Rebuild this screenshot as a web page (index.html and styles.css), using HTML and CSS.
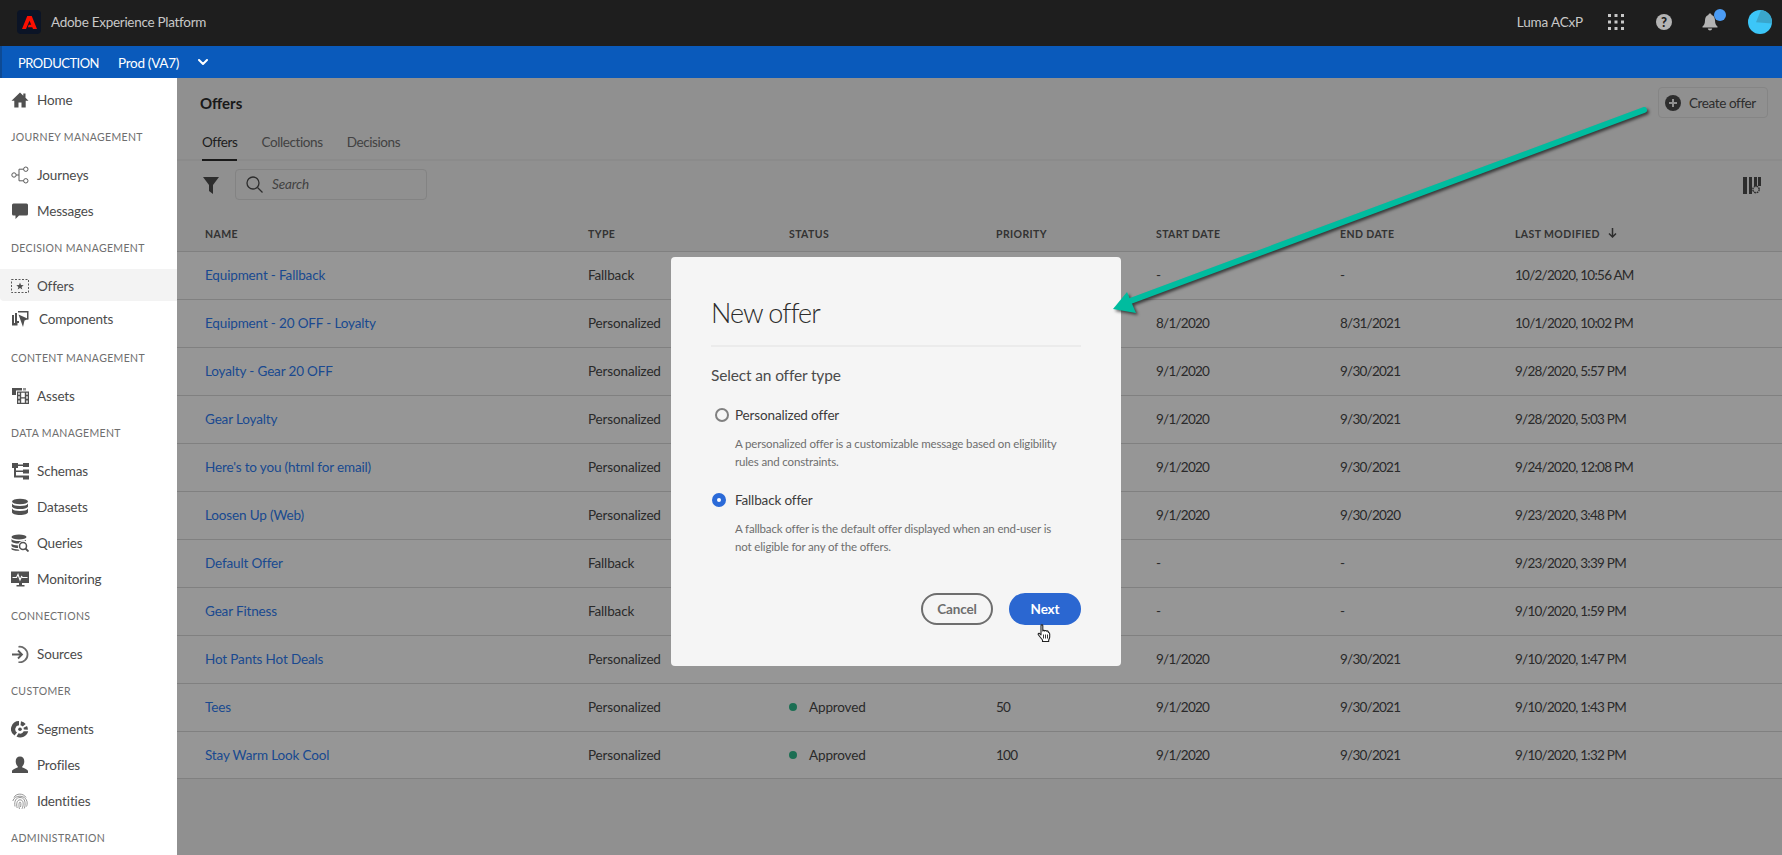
FILE: index.html
```html
<!DOCTYPE html>
<html lang="en">
<head>
  <meta charset="UTF-8" />
  <meta name="viewport" content="width=device-width, initial-scale=1.0" />
  <title>Offers - Adobe Experience Platform</title>
  <link rel="stylesheet" href="styles.css">
</head>
<body>
  <header class="topbar">
    <div class="brand">
      <span class="brand-logo">
        <svg width="15" height="13" viewBox="0 0 30 26"><path fill="#fa0f00" d="M10.500 0h9L30 26h-8L15 9.500 8 26H0zM13.500 17.500h5.500l2 5h-9.500z"/></svg>
      </span>
      <span class="brand-name">Adobe Experience Platform</span>
    </div>
    <div class="top-actions">
      <span class="org-name">Luma ACxP</span>
      <svg class="apps-icon" width="16" height="16" viewBox="0 0 16 16" fill="#c8c8c8">
        <rect x="0" y="0" width="3" height="3"/><rect x="6.500" y="0" width="3" height="3"/><rect x="13" y="0" width="3" height="3"/>
        <rect x="0" y="6.500" width="3" height="3"/><rect x="6.500" y="6.500" width="3" height="3"/><rect x="13" y="6.500" width="3" height="3"/>
        <rect x="0" y="13" width="3" height="3"/><rect x="6.500" y="13" width="3" height="3"/><rect x="13" y="13" width="3" height="3"/>
      </svg>
      <span class="help-icon">?</span>
      <span class="bell">
        <svg width="16" height="18" viewBox="0 0 16 18" fill="#b4b4b4"><path d="M8 0.500c-1 0-1.600.7-1.600 1.500C4 2.800 3 5 3 7.500c0 3-1 4.800-2.500 6v1h15v-1C14 12.300 13 10.500 13 7.500c0-2.500-1-4.700-3.400-5.500C9.600 1.200 9 .5 8 .5zM5.800 15.600h4.400C10 16.800 9.100 17.500 8 17.500s-2-.7-2.200-1.900z"/></svg>
        <span class="bell-dot"></span>
      </span>
      <svg class="avatar" width="24" height="24" viewBox="0 0 24 24"><circle cx="12" cy="12" r="12" fill="#3cc6f8"/><path fill="#3aa6cc" d="M13 0.100A12 12 0 0 1 23.900 13.500L8 12.200z"/></svg>
    </div>
  </header>

  <div class="envbar">
    <span class="env-label">PRODUCTION</span>
    <span class="env-name">Prod (VA7)</span>
    <svg width="10" height="7" viewBox="0 0 10 7"><path d="M1 1l4 4 4-4" fill="none" stroke="#fff" stroke-width="2" stroke-linecap="round" stroke-linejoin="round"/></svg>
  </div>

  <div class="layout">
    <nav class="sidebar">
      <a class="nav-item">
        <svg class="nav-icon" viewBox="0 0 18 18"><path d="M9 1.500L.5 9.800h2.800v6.700h4.200v-5h3v5h4.200V9.800h2.800L14.500 6.800V2.500h-2.200v2.200z"/></svg>
        Home
      </a>
      <div class="nav-heading">JOURNEY MANAGEMENT</div>
      <a class="nav-item">
        <svg class="nav-icon outline" viewBox="0 0 18 18"><circle cx="3" cy="9" r="2.200"/><circle cx="14.800" cy="3.200" r="2.200"/><circle cx="14.800" cy="14.800" r="2.200"/><path d="M5.200 9H8V3.200h4.600M8 9v5.800h4.600"/></svg>
        Journeys
      </a>
      <a class="nav-item">
        <svg class="nav-icon" viewBox="0 0 18 18"><path d="M2.500 1.500h13A1.500 1.500 0 0 1 17 3v9a1.500 1.500 0 0 1-1.500 1.500H8L4.500 17v-3.500h-2A1.500 1.500 0 0 1 1 12V3a1.500 1.500 0 0 1 1.500-1.500z"/></svg>
        Messages
      </a>
      <div class="nav-heading">DECISION MANAGEMENT</div>
      <a class="nav-item selected">
        <svg class="nav-icon" viewBox="0 0 18 18"><rect x=".5" y="2.500" width="17" height="13" fill="none" stroke="#5a5a5a" stroke-dasharray="2 1.500"/><path d="M9 5.500l1 2.500 2.700.2-2.100 1.700.7 2.600L9 11.100l-2.300 1.400.7-2.600-2.100-1.700L8 8z"/></svg>
        Offers
      </a>
      <a class="nav-item tight">
        <svg class="nav-icon" viewBox="0 0 18 18"><path d="M1 5h2v8h3.500v2.500H1z"/><path d="M4 3h2v8h2v2H4z"/><path d="M7 1h10.500v8.500h-1.500V2.500H7z"/><path d="M7.500 4.500l10 4.500-4 1.500L12 17z"/></svg>
        <span class="shifted">Components</span>
      </a>
      <div class="nav-heading">CONTENT MANAGEMENT</div>
      <a class="nav-item">
        <svg class="nav-icon" viewBox="0 0 18 18"><path d="M1 1h10v2.500H5V8H1z"/><path d="M12 1h3v2.500h-3z" opacity=".6"/><path fill-rule="evenodd" d="M6 4.500h12V17H6zM7.300 5.800v2h1.400v-2zm0 3.500v2.500h1.400V9.300zm0 4.200v2.200h1.400v-2.200zM15.300 5.800v2h1.400v-2zm0 3.500v2.500h1.400V9.300zm0 4.200v2.200h1.400v-2.200zM10.200 5.800v4.400h3.600V5.800zm0 5.800v4.100h3.600v-4.100z"/></svg>
        Assets
      </a>
      <div class="nav-heading">DATA MANAGEMENT</div>
      <a class="nav-item">
        <svg class="nav-icon" viewBox="0 0 18 18"><rect x="1" y="1" width="6" height="5"/><rect x="12" y="1" width="6" height="4"/><rect x="12" y="7.500" width="6" height="4"/><rect x="12" y="13.500" width="6" height="4"/><rect x="3" y="6" width="2" height="9"/><rect x="3" y="13.500" width="9" height="2"/><rect x="7" y="2.500" width="5" height="1.500"/><rect x="5" y="8.500" width="7" height="1.500"/></svg>
        Schemas
      </a>
      <a class="nav-item">
        <svg class="nav-icon" viewBox="0 0 18 18"><ellipse cx="9" cy="3.500" rx="8" ry="2.800"/><path d="M1 5.500c1 1.800 4 2.500 8 2.500s7-.7 8-2.500v3.200c-1 1.800-4 2.300-8 2.300s-7-.5-8-2.300zM1 10.500c1 1.800 4 2.500 8 2.500s7-.7 8-2.500v3.700c0 1.600-3.600 2.800-8 2.800s-8-1.200-8-2.800z"/></svg>
        Datasets
      </a>
      <a class="nav-item">
        <svg class="nav-icon" viewBox="0 0 18 18"><ellipse cx="8" cy="3" rx="7.500" ry="2.500"/><path d="M.5 5c1 1.500 3.500 2 7.500 2 3 0 5.500-.3 7-1.300V7c-3-.8-6 0-7.500 2.500-3 0-6-.5-7-2zM.5 9.800c1.200 1 3.500 1.500 6.500 1.600-.2 1-.1 1.500.2 2.500-3 0-5.700-.6-6.700-2zM.5 13.800c1.500 1.200 4 1.500 7 1.600l1 1.400c-4 .2-8-.6-8-1.800z"/><circle cx="12" cy="12" r="3.500" fill="none" stroke="#505050" stroke-width="1.500"/><path d="M14.500 14.500l3 3" stroke="#505050" stroke-width="1.800"/></svg>
        Queries
      </a>
      <a class="nav-item">
        <svg class="nav-icon" viewBox="0 0 18 18"><path d="M0 1.500h18v11.500H11v2h2.500v1.500h-8V15H8v-2H0z"/><path d="M1.500 7.500h4l1.500-3 2 5.500 1.500-3.500 1 1h5" fill="none" stroke="#fff" stroke-width="1.100"/></svg>
        Monitoring
      </a>
      <div class="nav-heading">CONNECTIONS</div>
      <a class="nav-item">
        <svg class="nav-icon outline thick" viewBox="0 0 18 18"><path d="M1 9.500h9.500M7 5.500l4 4-4 4"/><path d="M7.500 1.800a7.800 7.800 0 1 1 0 15.400" stroke="#6a6a6a"/></svg>
        Sources
      </a>
      <div class="nav-heading">CUSTOMER</div>
      <a class="nav-item">
        <svg class="nav-icon" viewBox="0 0 18 18"><path d="M8 1a8 8 0 0 0-4.500 14.600L6 12.500A4 4 0 0 1 8 5.200z"/><path d="M10 1.300l-.5 3.900a4 4 0 0 1 2.200 1.300l3-2.500A8 8 0 0 0 10 1.300zM16 6l-3.500 1.800.4 1.700 4 .3A8 8 0 0 0 16 6zM12.700 11.200a4 4 0 0 1-5.200 2L5.500 16.500a8 8 0 0 0 11.700-5.200z"/><circle cx="9" cy="9.200" r="1.800"/></svg>
        Segments
      </a>
      <a class="nav-item">
        <svg class="nav-icon" viewBox="0 0 18 18"><path d="M9 .5c2.600 0 4.300 2 4.300 4.800 0 2-.8 3.800-2 5v1.300c1.700.7 5.700 1.800 5.700 3.700V17H1v-1.700c0-1.900 4-3 5.700-3.700v-1.300c-1.200-1.200-2-3-2-5C4.700 2.500 6.400.5 9 .5z"/></svg>
        Profiles
      </a>
      <a class="nav-item">
        <svg class="nav-icon outline print" viewBox="0 0 18 18"><path d="M3 5.500C5 1 12.500 1 15 5.500M1.800 9C3.500 2.500 14.500 2.500 16 9.500c.3 2 .2 3.500-.5 5M4 14.500C3 9 5 5.500 9 5.500s5.500 3.500 5 8c0 1-.3 2-.8 3M6.200 16C5 12 6 7.800 9 7.800s3.500 3 3 6c-.2 1-.5 2-1 3M8.500 17C7.500 14 8 10 9 10s1.200 2.500.5 5"/></svg>
        Identities
      </a>
      <div class="nav-heading">ADMINISTRATION</div>
    </nav>

    <main class="content">
      <div class="page-head">
        <h1 class="page-title">Offers</h1>
        <button class="create-btn">
          <svg width="16" height="16" viewBox="0 0 16 16"><circle cx="8" cy="8" r="8" fill="#4b4b4b"/><path d="M8 4v8M4 8h8" stroke="#f2f2f2" stroke-width="2"/></svg>
          Create offer
        </button>
      </div>

      <div class="tabs">
        <span class="tab active">Offers</span>
        <span class="tab">Collections</span>
        <span class="tab">Decisions</span>
      </div>

      <div class="toolbar">
        <svg class="filter-icon" width="16" height="17" viewBox="0 0 16 17"><path fill="#4b4b4b" d="M0 0h16L10 8v9l-4-3V8z"/></svg>
        <div class="search">
          <svg width="17" height="17" viewBox="0 0 17 17" fill="none" stroke="#4b4b4b" stroke-width="1.300"><circle cx="7" cy="7" r="6"/><path d="M11.500 11.500l5 5"/></svg>
          <span class="search-text">Search</span>
        </div>
        <svg class="columns-icon" width="18" height="17" viewBox="0 0 18 17" fill="#4b4b4b">
          <rect x="0" y="0" width="4" height="17"/><rect x="6" y="0" width="3" height="17"/><rect x="11" y="0" width="3" height="9"/><rect x="15" y="0" width="3" height="9"/>
          <circle cx="13" cy="12.500" r="3.200" fill="none" stroke="#4b4b4b" stroke-width="1.400" stroke-dasharray="1.800 .7"/>
        </svg>
      </div>

      <table class="offers">
        <thead>
          <tr>
            <th class="col-name">NAME</th>
            <th class="col-type">TYPE</th>
            <th class="col-status">STATUS</th>
            <th class="col-priority">PRIORITY</th>
            <th class="col-start">START DATE</th>
            <th class="col-end">END DATE</th>
            <th>LAST MODIFIED <svg class="sort-icon" width="9" height="10" viewBox="0 0 9 10"><path d="M4.500 0v9M1 5.500l3.500 3.500L8 5.500" fill="none" stroke="#4b4b4b" stroke-width="1.500"/></svg></th>
          </tr>
        </thead>
        <tbody>
          <tr><td><a>Equipment - Fallback</a></td><td>Fallback</td><td></td><td></td><td>-</td><td>-</td><td>10/2/2020, 10:56 AM</td></tr>
          <tr><td><a>Equipment - 20 OFF - Loyalty</a></td><td>Personalized</td><td></td><td></td><td>8/1/2020</td><td>8/31/2021</td><td>10/1/2020, 10:02 PM</td></tr>
          <tr><td><a>Loyalty - Gear 20 OFF</a></td><td>Personalized</td><td></td><td></td><td>9/1/2020</td><td>9/30/2021</td><td>9/28/2020, 5:57 PM</td></tr>
          <tr><td><a>Gear Loyalty</a></td><td>Personalized</td><td></td><td></td><td>9/1/2020</td><td>9/30/2021</td><td>9/28/2020, 5:03 PM</td></tr>
          <tr><td><a>Here's to you (html for email)</a></td><td>Personalized</td><td></td><td></td><td>9/1/2020</td><td>9/30/2021</td><td>9/24/2020, 12:08 PM</td></tr>
          <tr><td><a>Loosen Up (Web)</a></td><td>Personalized</td><td></td><td></td><td>9/1/2020</td><td>9/30/2020</td><td>9/23/2020, 3:48 PM</td></tr>
          <tr><td><a>Default Offer</a></td><td>Fallback</td><td></td><td></td><td>-</td><td>-</td><td>9/23/2020, 3:39 PM</td></tr>
          <tr><td><a>Gear Fitness</a></td><td>Fallback</td><td></td><td></td><td>-</td><td>-</td><td>9/10/2020, 1:59 PM</td></tr>
          <tr><td><a>Hot Pants Hot Deals</a></td><td>Personalized</td><td><i class="dot"></i>Approved</td><td></td><td>9/1/2020</td><td>9/30/2021</td><td>9/10/2020, 1:47 PM</td></tr>
          <tr><td><a>Tees</a></td><td>Personalized</td><td><i class="dot"></i>Approved</td><td>50</td><td>9/1/2020</td><td>9/30/2021</td><td>9/10/2020, 1:43 PM</td></tr>
          <tr class="last-row"><td><a>Stay Warm Look Cool</a></td><td>Personalized</td><td><i class="dot"></i>Approved</td><td>100</td><td>9/1/2020</td><td>9/30/2021</td><td>9/10/2020, 1:32 PM</td></tr>
        </tbody>
      </table>

      <div class="scrim"></div>
    </main>
  </div>

  <section class="modal">
    <h2 class="modal-title">New offer</h2>
    <h3 class="modal-sub">Select an offer type</h3>
    <div class="option">
      <span class="radio"></span>
      <div class="option-label">Personalized offer</div>
    </div>
    <p class="option-desc">A personalized offer is a customizable message based on eligibility rules and constraints.</p>
    <div class="option">
      <span class="radio checked"></span>
      <div class="option-label">Fallback offer</div>
    </div>
    <p class="option-desc">A fallback offer is the default offer displayed when an end-user is not eligible for any of the offers.</p>
    <div class="modal-actions">
      <button class="btn-cancel">Cancel</button>
      <button class="btn-next">Next</button>
    </div>
  </section>

  <!-- annotation arrow drawn over the screenshot -->
  <svg class="arrow" width="560" height="230" viewBox="0 0 560 230">
    <path d="M541 12L22 205" stroke="#00bc9f" stroke-width="6" stroke-linecap="round" fill="none"/>
    <path d="M10 211L24 194 33 215z" fill="#00bc9f"/>
  </svg>

  <svg class="hand" width="15" height="19" viewBox="0 0 15 19">
    <path d="M4 1.500c0-1 1.800-1 1.800 0V7c.3-.8 1.600-.8 1.800 0 .3-.7 1.600-.7 1.800.2.400-.6 1.600-.4 1.700.4l.6 1c.6.200 1 .8 1 1.500v3c0 1-.5 2-1 3v1.400H5.500v-1.500L1.500 11c-.8-1-.2-2 .8-1.700L4 10.800z" fill="#fff" stroke="#222" stroke-width="1.100" stroke-linejoin="round"/>
    <path d="M6.500 10.500v4M8.500 10.500v4M10.500 10.500v4" stroke="#222" stroke-width=".9"/>
  </svg>
</body>
</html>
```

FILE: styles.css
```css
* {
  margin: 0;
  padding: 0;
  box-sizing: border-box;
}
body {
  height: 855px;
  overflow: hidden;
  background-color: #fff;
  font-family: Lato, 'Noto Sans', sans-serif;
  font-size: 13.5px;
  letter-spacing: -0.15px;
  color: #4b4b4b;
}

/* top bars */
.topbar {
  height: 46px;
  background-color: #1e1e1e;
  display: flex;
  align-items: center;
  justify-content: space-between;
  padding: 0 10px 2px 17px;
  color: #c8c8c8;
}
.brand {
  display: flex;
  align-items: center;
  gap: 10px;
}
.brand-logo {
  width: 24px;
  height: 24px;
  border-radius: 4px;
  background-color: #0b1426;
  display: flex;
  align-items: center;
  justify-content: center;
}
.brand-name {
  letter-spacing: -0.28px;
}
.top-actions {
  display: flex;
  align-items: center;
}
.org-name {
  margin-right: 25px;
}
.apps-icon {
  margin-right: 32px;
}
.help-icon {
  width: 16px;
  height: 16px;
  border-radius: 50%;
  background-color: #b4b4b4;
  color: #1e1e1e;
  font-size: 13px;
  font-weight: 900;
  line-height: 16px;
  text-align: center;
  margin-right: 30px;
}
.bell {
  position: relative;
  width: 16px;
  height: 18px;
  margin-right: 30px;
}
.bell-dot {
  position: absolute;
  top: -4px;
  left: 12px;
  width: 12px;
  height: 12px;
  border-radius: 50%;
  background-color: #4b9cf5;
}
.envbar {
  height: 32px;
  background-color: #0a5abb;
  border-left: 2px solid #0d4a94;
  color: #fff;
  display: flex;
  align-items: center;
  padding: 1px 0 0 16px;
}
.env-label {
  font-size: 13px;
  letter-spacing: -0.5px;
  margin-right: 19px;
}
.env-name {
  letter-spacing: -0.3px;
  margin-right: 19px;
}

.layout {
  display: flex;
  height: 777px;
}

/* sidebar */
.sidebar {
  width: 177px;
  flex: none;
  background-color: #fff;
  padding-top: 4px;
  overflow: hidden;
}
.nav-item {
  display: flex;
  align-items: center;
  gap: 8px;
  height: 36px;
  padding-left: 11px;
  color: #4b4b4b;
}
.nav-item.selected {
  height: 32px;
  margin-top: 2px;
  padding-top: 1px;
  background-color: #f3f3f3;
  border-radius: 0 0 0 4px;
}
.nav-item.tight {
  height: 34px;
  margin-bottom: 4px;
  padding-top: 1px;
}
.shifted {
  margin-left: 2px;
}
.nav-icon {
  width: 18px;
  height: 18px;
  flex: none;
  fill: #505050;
}
.nav-icon.outline {
  fill: none;
  stroke: #5a5a5a;
  stroke-width: 1;
}
.nav-icon.thick {
  stroke-width: 1.800;
}
.nav-icon.print {
  stroke: #8a8a8a;
  stroke-width: .9;
}
.nav-heading {
  height: 38px;
  margin-bottom: 1px;
  line-height: 38px;
  padding-left: 11px;
  font-size: 10.5px;
  letter-spacing: .35px;
  color: #6e6e6e;
}

/* main */
.content {
  position: relative;
  flex: 1;
  background-color: #f0f0f0;
}
.scrim {
  position: absolute;
  top: 0;
  right: 0;
  bottom: 0;
  left: 0;
  background: rgba(0, 0, 0, 0.4);
}
.page-head {
  height: 40px;
  display: flex;
  align-items: flex-end;
  justify-content: space-between;
  padding: 0 14px 0 23px;
}
.page-title {
  font-size: 15px;
  font-weight: 700;
  letter-spacing: 0;
  color: #2c2c2c;
  padding-bottom: 6px;
}
.create-btn {
  height: 31px;
  width: 110px;
  display: flex;
  align-items: center;
  gap: 8px;
  padding-left: 6px;
  background: transparent;
  border: 1px solid #dedede;
  border-radius: 4px;
  font: inherit;
  letter-spacing: -0.4px;
  color: #4b4b4b;
}
.tabs {
  height: 43px;
  display: flex;
  gap: 24px;
  padding-left: 25px;
  border-bottom: 2px solid #e8e8e8;
  letter-spacing: -0.4px;
}
.tab {
  height: 41px;
  line-height: 48px;
  color: #6e6e6e;
}
.tab.active {
  color: #333;
  border-bottom: 2px solid #2c2c2c;
  height: 43px;
  line-height: 48px;
}
.toolbar {
  height: 56px;
  display: flex;
  align-items: flex-start;
  padding: 8px 21px 0 26px;
}
.filter-icon {
  margin: 8px 16px 0 0;
}
.search {
  width: 192px;
  height: 31px;
  display: flex;
  align-items: center;
  gap: 9px;
  padding-left: 10px;
  border: 1px solid #dadada;
  border-radius: 4px;
}
.search-text {
  font-style: italic;
  color: #6e6e6e;
  padding-bottom: 2px;
}
.columns-icon {
  margin: 8px 0 0 auto;
}

/* table */
.offers {
  width: 100%;
  border-collapse: collapse;
  table-layout: fixed;
}
.offers th {
  height: 34px;
  text-align: left;
  font-size: 10.5px;
  font-weight: 700;
  letter-spacing: .4px;
  color: #555;
  border-bottom: 1px solid #d6d6d6;
}
.offers td {
  height: 48px;
  background-color: #fafafa;
  border-bottom: 1px solid #d6d6d6;
  color: #474747;
}
.offers td:nth-child(n+4) {
  letter-spacing: -0.75px;
}
.offers .last-row td {
  height: 47px;
}
.offers th:first-child,
.offers td:first-child {
  padding-left: 28px;
}
.col-name { width: 411px; }
.col-type { width: 201px; }
.col-status { width: 207px; }
.col-priority { width: 160px; }
.col-start { width: 184px; }
.col-end { width: 175px; }
.offers a {
  color: #2d7bf0;
}
.sort-icon {
  margin-left: 5px;
}
.dot {
  display: inline-block;
  width: 8px;
  height: 8px;
  margin-right: 12px;
  border-radius: 50%;
  background-color: #2eb88a;
  vertical-align: 1px;
}

/* modal */
.modal {
  position: absolute;
  left: 671px;
  top: 257px;
  width: 450px;
  height: 409px;
  padding: 0 40px;
  background-color: #f5f5f5;
  border-radius: 4px;
}
.modal-title {
  height: 90px;
  padding-top: 36px;
  font-size: 27px;
  font-weight: 300;
  line-height: 40px;
  letter-spacing: -1px;
  color: #2c2c2c;
  border-bottom: 2px solid #ebebeb;
}
.modal-sub {
  margin-top: 16px;
  font-size: 15.5px;
  font-weight: 400;
  line-height: 24px;
  color: #4b4b4b;
}
.option {
  display: flex;
  align-items: center;
  height: 20px;
  margin-top: 18px;
  position: relative;
  padding-left: 24px;
}
.radio {
  position: absolute;
  left: 4px;
  top: 3px;
  width: 14px;
  height: 14px;
  border: 2px solid #808080;
  border-radius: 50%;
  background-color: #f5f5f5;
}
.radio.checked {
  left: 1px;
  border: 5px solid #2b6ad8;
  background-color: #fff;
}
.option-label {
  color: #3c3c3c;
}
.option-desc {
  margin-top: 10px;
  padding: 0 14px 0 24px;
  font-size: 11.5px;
  line-height: 18px;
  color: #6e6e6e;
}
.option-desc + .option {
  margin-top: 19px;
}
.modal-actions {
  display: flex;
  justify-content: flex-end;
  gap: 16px;
  margin-top: 37px;
}
.btn-cancel,
.btn-next {
  width: 72px;
  height: 32px;
  border-radius: 16px;
  font: inherit;
  font-weight: 700;
  letter-spacing: inherit;
}
.btn-cancel {
  background: transparent;
  border: 2px solid #6e6e6e;
  color: #6e6e6e;
}
.btn-next {
  background-color: #2b67d1;
  border: none;
  color: #fff;
}

.arrow {
  position: absolute;
  left: 1103px;
  top: 98px;
  filter: drop-shadow(2px 2px 1.500px rgba(0, 0, 0, 0.6));
  overflow: visible;
}
.hand {
  position: absolute;
  left: 1037px;
  top: 624px;
}
```
